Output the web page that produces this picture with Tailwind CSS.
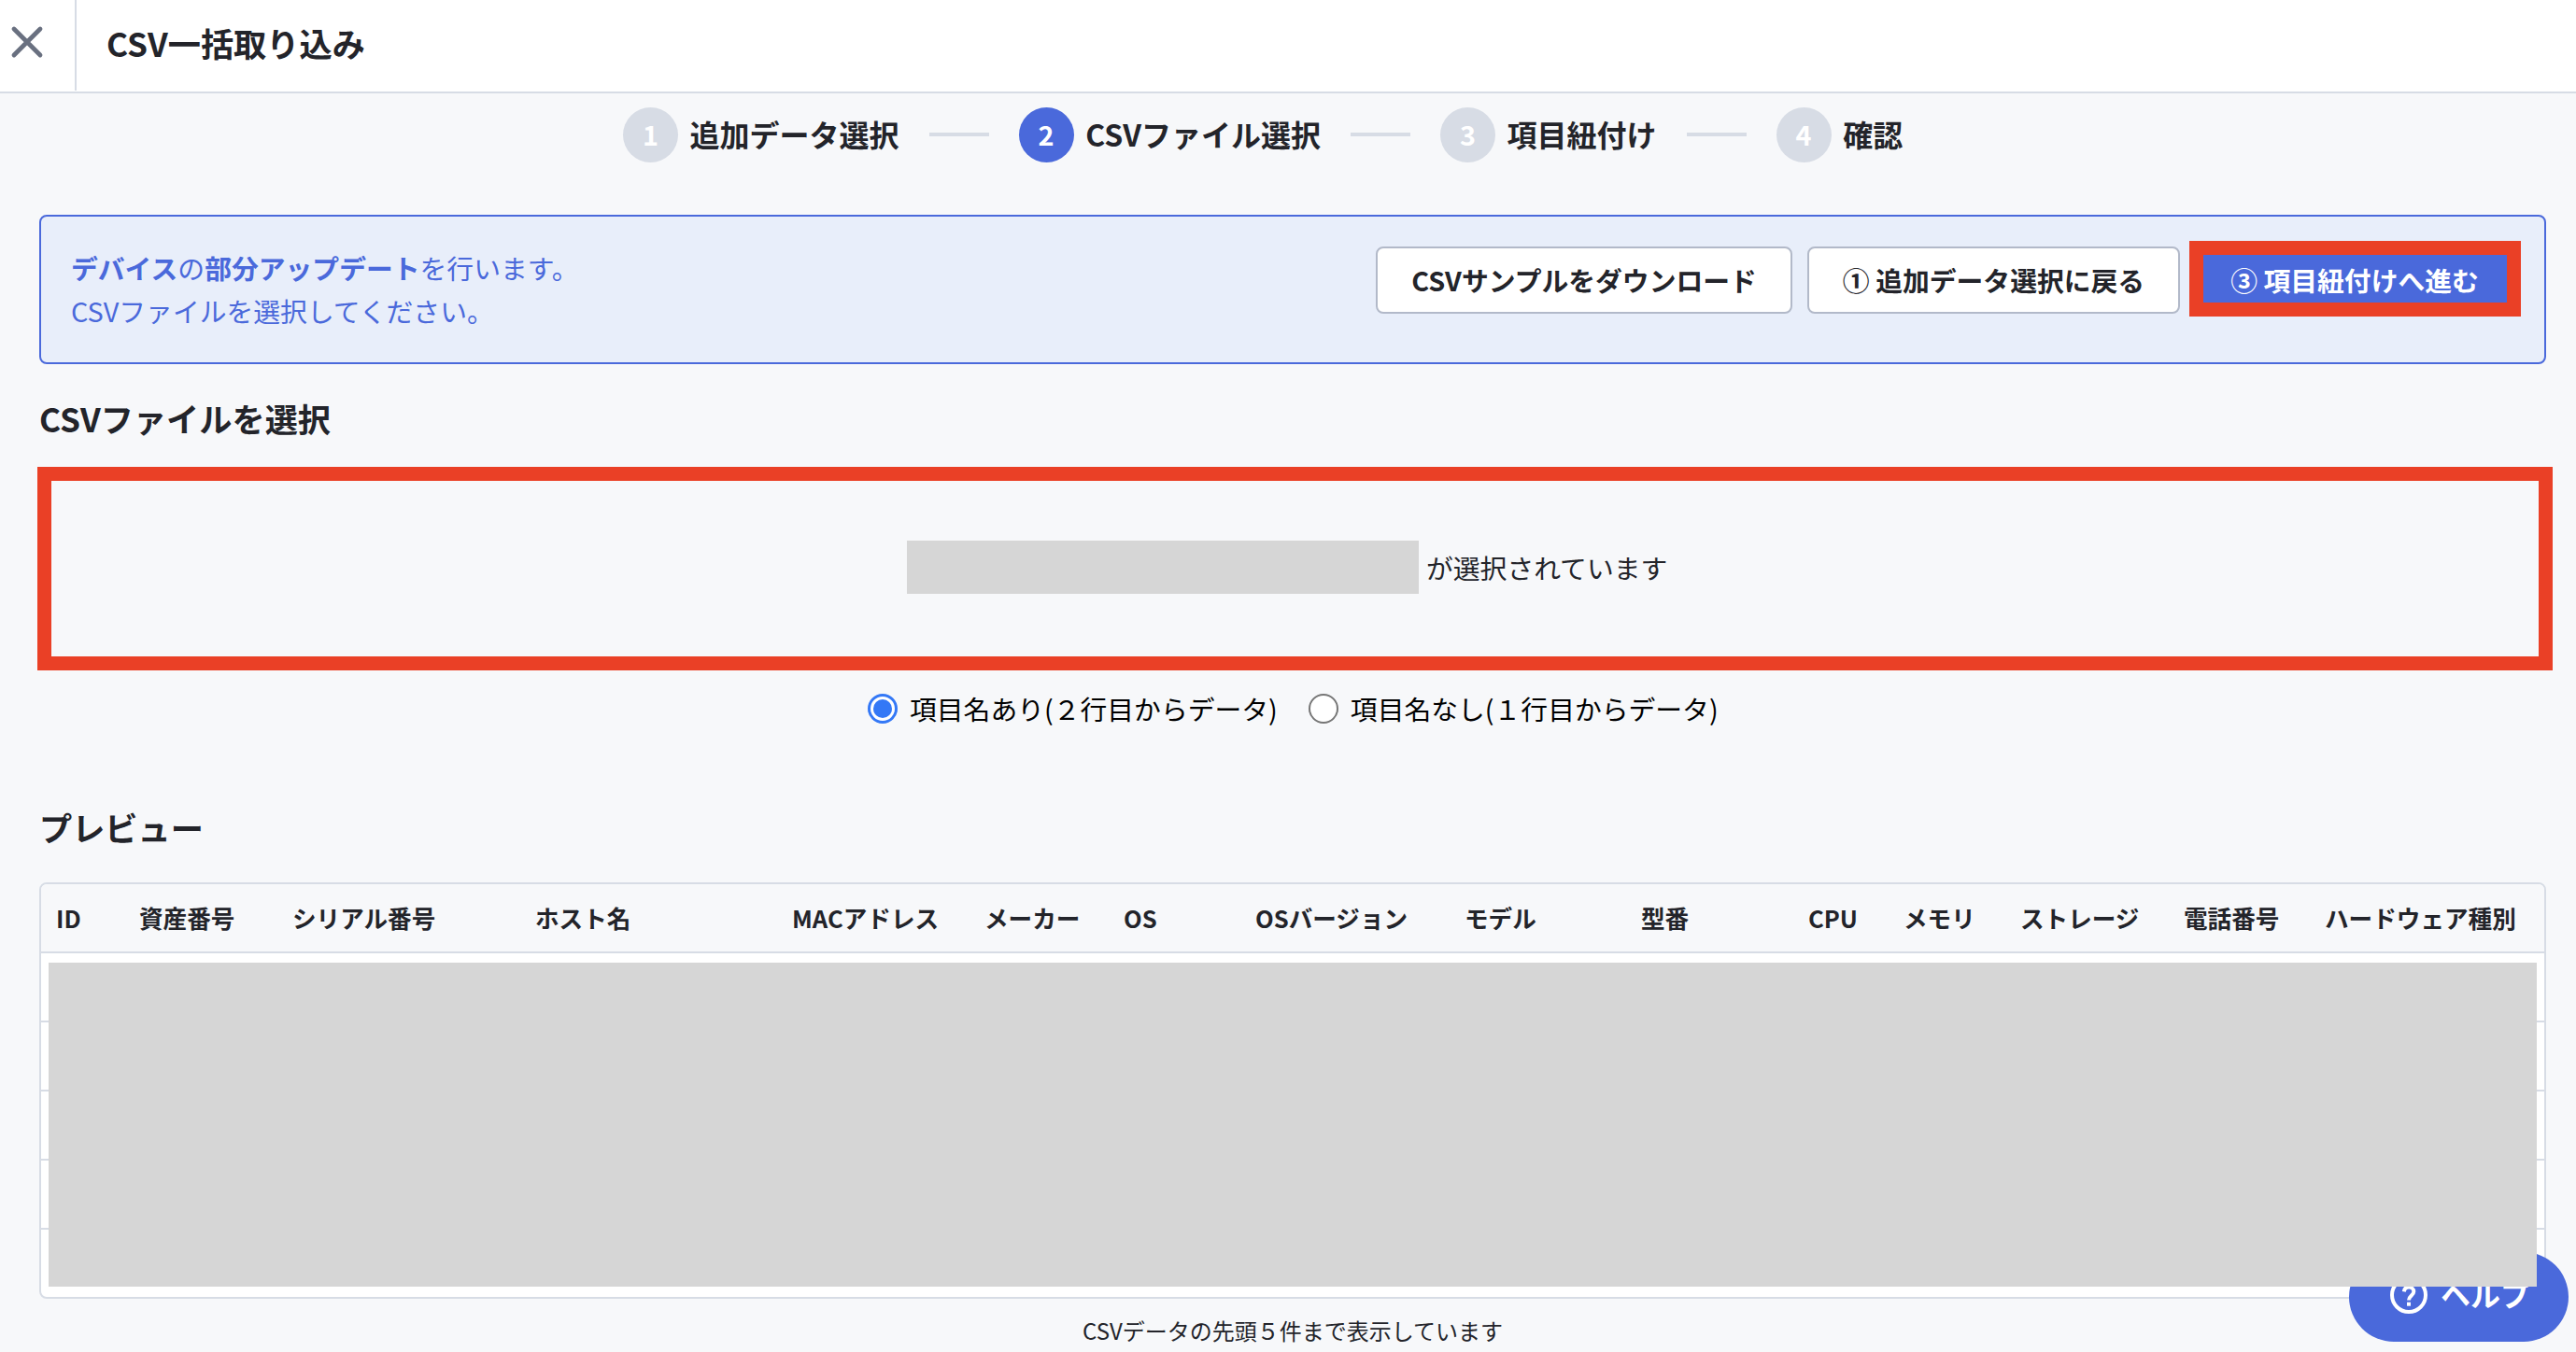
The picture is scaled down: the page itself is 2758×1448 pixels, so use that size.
<!DOCTYPE html>
<html lang="ja">
<head>
    <meta charset="UTF-8">
    <meta name="viewport" content="width=device-width, initial-scale=1.0">
    <title>CSV一括取り込み</title>
    <script src="https://cdn.jsdelivr.net/npm/@tailwindcss/browser@4"></script>
</head>
<body class="h-[1448px] overflow-hidden bg-[#f7f8fa] font-['Noto_Sans_CJK_JP',sans-serif] text-[28.8px] leading-[46px] text-[#23242a]">
    <!-- Header -->
    <header class="flex h-[100px] border-b-2 border-[#d7dce5] bg-white">
        <button class="flex h-[97px] w-[82px] items-center border-r-2 border-[#d7dce5] pl-[11px]">
            <svg class="-mt-[7px] size-9" viewBox="0 0 36 36" fill="none" stroke="#697080" stroke-width="4.8" stroke-linecap="round">
                <path d="M4 4 32 32M32 4 4 32"/>
            </svg>
        </button>
        <h1 class="pt-5 pl-8 text-[35.2px] leading-[52px] font-bold">CSV一括取り込み</h1>
    </header>

    <!-- Steps -->
    <ol class="mt-[15px] flex h-[59px] items-center pl-[667px] text-[32px] font-bold">
        <li class="flex items-center gap-[12.6px]">
            <span class="flex size-[59px] items-center justify-center rounded-full bg-[#d7dce5] pb-px text-[28.8px] text-white">1</span>
            <span class="-mt-1">追加データ選択</span>
        </li>
        <li class="mx-8 -mt-[2px] h-1 w-16 bg-[#d7dce5]"></li>
        <li class="flex items-center gap-[12.6px]">
            <span class="flex size-[59px] items-center justify-center rounded-full bg-[#4a69db] pb-px text-[28.8px] text-white">2</span>
            <span class="-mt-1">CSVファイル選択</span>
        </li>
        <li class="mx-8 -mt-[2px] h-1 w-16 bg-[#d7dce5]"></li>
        <li class="flex items-center gap-[12.6px]">
            <span class="flex size-[59px] items-center justify-center rounded-full bg-[#d7dce5] pb-px text-[28.8px] text-white">3</span>
            <span class="-mt-1">項目紐付け</span>
        </li>
        <li class="mx-8 -mt-[2px] h-1 w-16 bg-[#d7dce5]"></li>
        <li class="flex items-center gap-[12.6px]">
            <span class="flex size-[59px] items-center justify-center rounded-full bg-[#d7dce5] pb-px text-[28.8px] text-white">4</span>
            <span class="-mt-1">確認</span>
        </li>
    </ol>

    <main class="mr-8 ml-[42px]">
        <!-- Guide message and actions -->
        <div class="mt-14 flex h-40 items-start justify-between rounded-lg border-2 border-[#4a69db] bg-[#e8eefa] py-8 pr-8 pl-8">
            <p class="text-[#4a69db]"><b>デバイス</b>の<b>部分アップデート</b>を行います。<br>CSVファイルを選択してください。</p>
            <div class="flex gap-4 font-bold">
                <button class="h-[72px] w-[446px] rounded-lg border-2 border-[#b2b9c9] bg-white">CSVサンプルをダウンロード</button>
                <button class="h-[72px] w-[399px] rounded-lg border-2 border-[#b2b9c9] bg-white">① 追加データ選択に戻る</button>
                <button class="relative h-[72px] w-[342px] rounded-lg bg-[#4a69db] text-white">③ 項目紐付けへ進む
                    <span class="absolute -top-[6px] -left-[6.500px] h-[81px] w-[355px] border-[15px] border-[#ea4026]"></span>
                </button>
            </div>
        </div>

        <!-- File select -->
        <h2 class="mt-8 text-[35.2px] leading-[52px] font-bold">CSVファイルを選択</h2>
        <div class="-mr-[7px] mt-[26px] -ml-[2px] flex h-[218px] items-center border-[15px] border-[#ea4026] pb-[3px] pl-[916px]">
            <span class="mr-2 h-[57px] w-[548px] bg-[#d6d6d6]"></span>が選択されています
        </div>

        <div class="mt-[17px] flex h-12 items-center pl-[887px] text-black">
            <label class="flex items-center">
                <span class="mr-[13px] flex size-8 items-center justify-center rounded-full border-[3px] border-[#3478f6] bg-white"><span class="size-5 rounded-full bg-[#3478f6]"></span></span>項目名あり(２行目からデータ)
            </label>
            <label class="ml-[33px] flex items-center">
                <span class="mr-[13px] size-8 rounded-full border-2 border-[#767676] bg-white"></span>項目名なし(１行目からデータ)
            </label>
        </div>

        <!-- Preview -->
        <h2 class="mt-[77px] text-[35.2px] leading-[52px] font-bold">プレビュー</h2>
        <div class="relative mt-[33px] h-[446px] rounded-lg border-2 border-[#d7dce5] bg-white">
            <div class="grid h-[74px] grid-cols-[89px_164px_260px_275px_206px_149px_141px_224px_189px_179px_102px_125px_175px_151px_1fr] items-center rounded-t-md bg-[#f7f8fa] pb-[2px] pl-4 text-[25.6px] font-bold whitespace-nowrap">
                <span>ID</span>
                <span>資産番号</span>
                <span>シリアル番号</span>
                <span>ホスト名</span>
                <span>MACアドレス</span>
                <span>メーカー</span>
                <span>OS</span>
                <span>OSバージョン</span>
                <span>モデル</span>
                <span>型番</span>
                <span>CPU</span>
                <span>メモリ</span>
                <span>ストレージ</span>
                <span>電話番号</span>
                <span>ハードウェア種別</span>
            </div>
            <div class="-mt-[2px] h-[74px] border-t-2 border-[#d7dce5]"></div>
            <div class="h-[74px] border-t-2 border-[#d7dce5]"></div>
            <div class="h-[74px] border-t-2 border-[#d7dce5]"></div>
            <div class="h-[74px] border-t-2 border-[#d7dce5]"></div>
            <div class="h-[74px] border-t-2 border-[#d7dce5]"></div>
            <div class="absolute top-[83.5px] left-[7.500px] z-20 h-[347px] w-[2664px] bg-[#d6d6d6]"></div>
        </div>
        <p class="mt-[11px] text-center text-2xl leading-[46px]">CSVデータの先頭５件まで表示しています</p>
    </main>

    <!-- Help -->
    <button class="fixed right-2 bottom-[11px] z-10 flex h-24 w-[235px] items-center rounded-full bg-[#4a69db] pb-1 pl-11 text-[32px] font-bold text-white">
        <svg class="mr-[14px] size-10" viewBox="0 0 40 40" fill="none" stroke="currentColor" stroke-width="4">
            <circle cx="20" cy="20" r="18"/>
            <path d="M14.8 16.3c.5-3 2.500-4.700 5.300-4.700 3 0 5.200 1.900 5.200 4.600 0 4.200-5.300 4.300-5.300 9.300"/>
            <path d="M18 29.700h4"/>
        </svg>
        <span class="-mt-1">ヘルプ</span>
    </button>
</body>
</html>
